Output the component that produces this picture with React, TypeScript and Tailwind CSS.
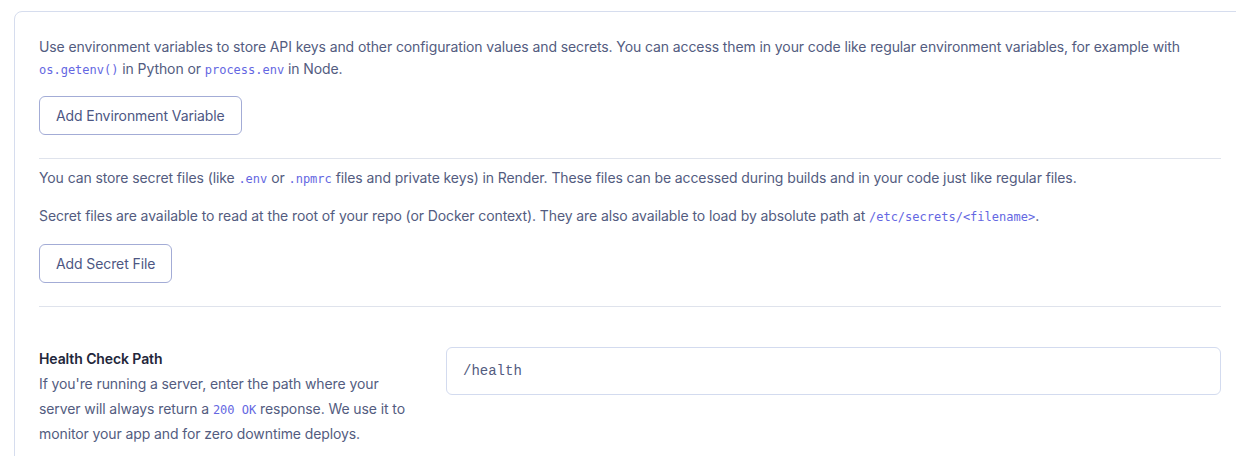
import React from "react";

const Code: React.FC<{ children: React.ReactNode }> = ({ children }) => (
  <code className="font-['DejaVu_Sans_Mono',monospace] text-[12px] leading-none tracking-normal text-[#6467e2]">
    {children}
  </code>
);

const OutlineButton: React.FC<{ label: string }> = ({ label }) => (
  <button className="h-[39px] rounded-[6px] border border-[#a3acd6] bg-white px-4 text-[14px] tracking-[-0.1px] text-[#4d5783]">
    {label}
  </button>
);

export default function App() {
  return (
    <div className="h-[456px] w-full overflow-hidden bg-white font-['Inter',sans-serif] tracking-[-0.1px]">
      <div className="ml-[14px] mt-[11px] w-[1256px] rounded-tl-[8px] border border-[#d6ddee] bg-white px-6 pt-6 pb-10">
        <div className="w-[1182px]">
          {/* Environment variables */}
          <p className="text-[14px] leading-[22px] text-[#535c80]">
            Use environment variables to store API keys and other configuration values and secrets. You can access them in
            your code like regular environment variables, for example with <Code>os.getenv()</Code> in Python or{" "}
            <Code>process.env</Code> in Node.
          </p>
          <div className="mt-[16px]">
            <OutlineButton label="Add Environment Variable" />
          </div>

          <div className="mt-[23px] border-t border-[#dfe3ec]" />

          {/* Secret files */}
          <p className="mt-[8px] text-[14px] leading-[22px] text-[#535c80]">
            You can store secret files (like <Code>.env</Code> or <Code>.npmrc</Code> files and private keys) in Render.
            These files can be accessed during builds and in your code just like regular files.
          </p>
          <p className="mt-[16px] text-[14px] leading-[22px] text-[#535c80]">
            Secret files are available to read at the root of your repo (or Docker context). They are also available to
            load by absolute path at <Code>/etc/secrets/&lt;filename&gt;</Code>.
          </p>
          <div className="mt-[17px]">
            <OutlineButton label="Add Secret File" />
          </div>

          <div className="mt-[23px] border-t border-[#dfe3ec]" />

          {/* Health check */}
          <div className="mt-[41px] grid grid-cols-[407px_1fr]">
            <div className="pr-[27px]">
              <h3 className="text-[14px] font-semibold leading-[22px] text-[#22263a]">Health Check Path</h3>
              <p className="mt-[1px] text-[14px] leading-[25px] text-[#535c80]">
                If you're running a server, enter the path where your server will always return a <Code>200 OK</Code>{" "}
                response. We use it to monitor your app and for zero downtime deploys.
              </p>
            </div>
            <div>
              <input
                readOnly
                value="/health"
                className="-mt-px h-[48px] w-full rounded-[6px] border border-[#d3dbef] px-4 font-['Liberation_Mono',monospace] text-[14px] tracking-normal text-[#535c80] outline-none"
              />
            </div>
          </div>
        </div>
      </div>
    </div>
  );
}
